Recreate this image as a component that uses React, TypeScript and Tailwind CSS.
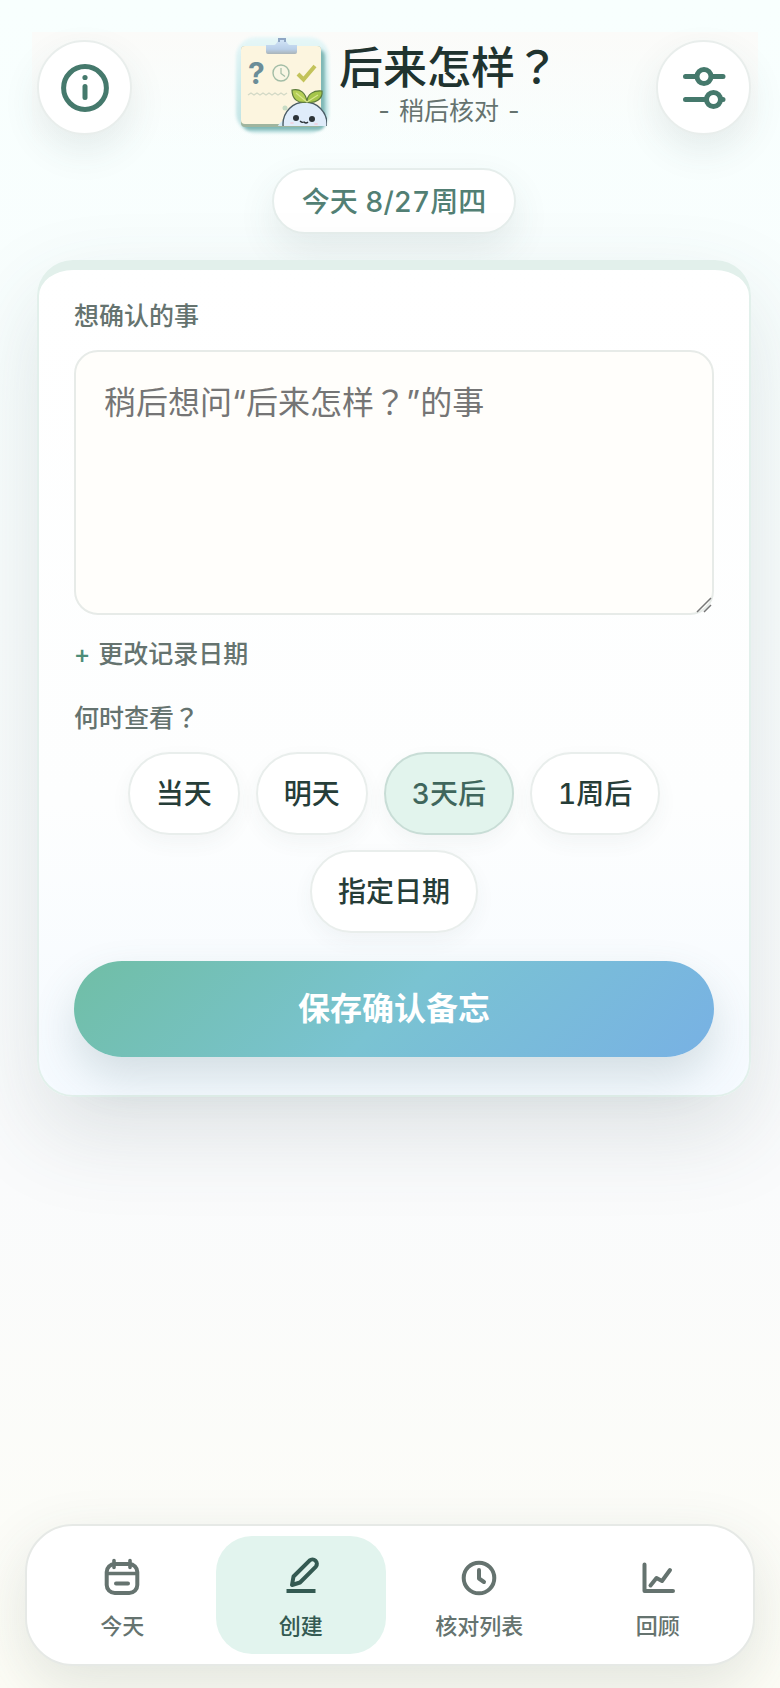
import { useState } from 'react';
import type { ReactNode } from 'react';

const dateOptions = ['当天', '明天', '3天后', '1周后', '指定日期'];

const NavIcon = ({ children }: { children: ReactNode }) => (
  <svg
    viewBox="0 0 40 40"
    className="h-10 w-10"
    fill="none"
    stroke="currentColor"
    strokeWidth="4"
    strokeLinecap="round"
    strokeLinejoin="round"
    aria-hidden="true"
  >
    {children}
  </svg>
);

const navItems = [
  {
    label: '今天',
    icon: (
      <NavIcon>
        <rect x="4.7" y="8" width="30.6" height="29" rx="8" />
        <path d="M12 4.5v7M28 4.5v7M5 17.5h30" strokeWidth="3.6" />
        <path d="M14 27.5h12" />
      </NavIcon>
    ),
  },
  {
    label: '创建',
    icon: (
      <NavIcon>
        <path d="M11 29l1.5-8.5L28.5 4.6a4.4 4.4 0 0 1 6.4 6L19 26.5z" />
        <path d="M5.5 35h29" strokeLinecap="butt" />
      </NavIcon>
    ),
  },
  {
    label: '核对列表',
    icon: (
      <NavIcon>
        <circle cx="20" cy="22" r="15.3" />
        <path d="M20 14v8.5l5 3.5" />
      </NavIcon>
    ),
  },
  {
    label: '回顾',
    icon: (
      <NavIcon>
        <path d="M6.5 8.5V35H35" />
        <path d="M12.5 29.5l6-7.5 5.5 3 8-11" />
      </NavIcon>
    ),
  },
];

const Logo = () => (
  <svg viewBox="12 8 98 102" className="h-[102px] w-[98px] shrink-0" aria-hidden="true">
    <defs>
      <linearGradient id="tile" x1="0" y1="0" x2="0" y2="1">
        <stop offset="0" stopColor="#e2f6f8" />
        <stop offset="0.5" stopColor="#c6e9ea" />
        <stop offset="1" stopColor="#b4dcdd" />
      </linearGradient>
      <linearGradient id="clip" x1="0" y1="0" x2="0" y2="1">
        <stop offset="0" stopColor="#d6e8fa" />
        <stop offset="0.7" stopColor="#b9cfe8" />
        <stop offset="1" stopColor="#aab4b8" />
      </linearGradient>
      <clipPath id="floor">
        <rect x="50" y="50" width="56" height="50" />
      </clipPath>
      <filter id="soft" x="-10%" y="-10%" width="120%" height="120%">
        <feGaussianBlur stdDeviation="1.6" />
      </filter>
    </defs>
    <rect x="15" y="11" width="93" height="96" rx="20" fill="url(#tile)" opacity="0.8" filter="url(#soft)" />
    <rect x="22" y="23" width="82" height="81" rx="7" fill="#7fb8b6" filter="url(#soft)" />
    <rect x="20" y="20" width="80" height="81" rx="4" fill="#9fb59f" />
    <rect x="20" y="20" width="80" height="78" rx="4" fill="#fcf5df" />
    <path d="M45 19h8c3 0 4-7 8-7s5 7 8 7h7v7a2 2 0 0 1-2 2H47a2 2 0 0 1-2-2z" fill="url(#clip)" />
    <path d="M58 16v-3h6v3" fill="none" stroke="#8fa6c4" strokeWidth="2" />
    <text
      x="27"
      y="58"
      fontFamily="Inter, sans-serif"
      fontSize="30"
      fontWeight="700"
      fill="#6b8d98"
    >
      ?
    </text>
    <circle cx="60" cy="47" r="8" fill="#f9f6e4" stroke="#a3bda6" strokeWidth="1.4" />
    <path d="M60 42v5.5l4 3" fill="none" stroke="#a3bda6" strokeWidth="1.2" />
    <path d="M77 48l5.5 5.5L94 40" fill="none" stroke="#c3c35a" strokeWidth="4" />
    <path
      d="M27 69l3-2 3 2 3-2 3 2 3-2 3 2 3-2 3 2 3-2 3 2 3-2 3 2 3-2"
      fill="none"
      stroke="#d3d9c6"
      strokeWidth="1.4"
    />
    <circle cx="64" cy="82" r="2.5" fill="#c7dcc5" />
    <g clipPath="url(#floor)">
      <path d="M56 102c2-6 7-8 8-8h42v8z" fill="#d5ebf5" />
      <circle cx="84" cy="98" r="22" fill="#dfecfa" stroke="#4b5d66" strokeWidth="1.4" />
    </g>
    <path
      d="M86 76c-9 2-15-3-15-12 8-2 14 3 15 12z"
      fill="#b5cf55"
      stroke="#5c7a3c"
      strokeWidth="1.2"
    />
    <path
      d="M86 76c0-8 7-12 15-11 1 8-7 13-15 11z"
      fill="#a5c64a"
      stroke="#5c7a3c"
      strokeWidth="1.2"
    />
    <path d="M75 67l11 9 11-7" fill="none" stroke="#d9e58d" strokeWidth="1.2" />
    <circle cx="75" cy="92" r="3" fill="#2c3338" />
    <circle cx="91" cy="93" r="3" fill="#2c3338" />
    <path d="M79 95q2 2 4 1q2 2 4 0" fill="none" stroke="#2c3338" strokeWidth="1.3" />
    <ellipse cx="71" cy="97" rx="2" ry="1" fill="#edd3e0" />
    <ellipse cx="95" cy="98" rx="2" ry="1" fill="#edd3e0" />
  </svg>
);

// The TC face centres the full-width question mark in its box
const QuestionMark = () => (
  <span className="font-['Noto_Sans_CJK_TC',sans-serif] leading-none" lang="zh-Hant">
    ？
  </span>
);

const roundButton =
  'flex h-[95px] w-[95px] shrink-0 items-center justify-center rounded-full border-2 border-[#e9eeec] bg-white text-[#45796c] shadow-[0_16px_36px_rgba(60,80,76,0.1)]';

const App = () => {
  const [note, setNote] = useState('');
  const [when, setWhen] = useState('3天后');
  const [tab, setTab] = useState('创建');

  return (
    <div className="flex min-h-screen flex-col bg-linear-to-b from-[#f8fffe] via-[#fafbfc] via-70% to-[#fdfdf6] pt-8 pb-[22px] font-['Inter','Noto_Sans_CJK_SC',sans-serif] text-[#263d38] tabular-nums">
      {/* Header */}
      <header className="mr-[22px] ml-8 flex items-start justify-between bg-linear-to-b from-[#fbfbf9] to-transparent pr-[7px] pb-3.5 pl-[5px]">
        <button type="button" aria-label="说明" className={`${roundButton} mt-2`}>
          <svg viewBox="0 0 48 48" className="h-12 w-12" fill="none" aria-hidden="true">
            <circle cx="24" cy="24" r="21.4" stroke="currentColor" strokeWidth="5" />
            <circle cx="24" cy="13.5" r="2.6" fill="currentColor" />
            <path d="M24 22.5v11" stroke="currentColor" strokeWidth="5" strokeLinecap="round" />
          </svg>
        </button>
        <div className="flex items-start gap-2 pt-0.5 pl-1">
          <Logo />
          <div className="flex flex-col items-center pt-[7px]">
            <h1 className="text-[44px] leading-[54px] font-medium text-[#20332f]">
              后来怎样
              <QuestionMark />
            </h1>
            <p className="text-[25px] leading-8 text-[#65736f]">- 稍后核对 -</p>
          </div>
        </div>
        <button type="button" aria-label="设置" className={`${roundButton} mt-2`}>
          <svg
            viewBox="0 0 48 48"
            className="h-12 w-12"
            fill="none"
            stroke="currentColor"
            strokeWidth="5"
            strokeLinecap="round"
            aria-hidden="true"
          >
            <path d="M5.5 12.5H16M32 12.5h11M5.5 35.5H25M41 35.5h2" />
            <circle cx="24" cy="12.5" r="7" />
            <circle cx="33.5" cy="35.5" r="7" />
          </svg>
        </button>
      </header>

      <main className="flex flex-col items-center pt-[18px] pr-[29px] pl-[37px]">
        <div className="mb-[26px] flex h-[66px] items-center rounded-full border-2 border-[#e6eeec] bg-white px-7 pt-0.5 text-[28px] font-medium text-[#527f74] shadow-[0_16px_36px_rgba(60,80,76,0.1)]">
          今天 8/27周四
        </div>

        {/* Form */}
        <form
          onSubmit={(e) => e.preventDefault()}
          className="flex w-full flex-col rounded-[36px] border-2 border-t-10 border-[#e2f0eb] bg-linear-to-b from-white via-[#fdfefe] via-65% to-[#f5faff] bg-origin-border px-[35px] pt-7 pb-[38px] shadow-[0_36px_88px_rgba(60,80,90,0.15)]"
        >
          <label htmlFor="note" className="text-[25px] leading-9 font-medium text-[#65736f]">
            想确认的事
          </label>
          <div className="relative mt-4 flex">
            <textarea
              id="note"
              value={note}
              onChange={(e) => setNote(e.target.value)}
              placeholder="稍后想问“后来怎样？”的事"
              lang="zh-Hant"
              className="h-[265px] w-full resize-none rounded-[24px] border-2 border-[#e7ebe8] bg-[#fffefb] px-7 py-6 font-['Inter','Noto_Sans_CJK_TC',sans-serif] text-[32px] leading-[54px] outline-none placeholder:text-[#757575]"
            />
            <svg
              viewBox="0 0 16 16"
              className="pointer-events-none absolute right-0.5 bottom-0.5 h-4 w-4"
              fill="none"
              stroke="#777777"
              strokeWidth="1.5"
              aria-hidden="true"
            >
              <path d="M1 15L15 1M8 15l7-7" />
            </svg>
          </div>
          <button
            type="button"
            className="mt-[21px] flex gap-2 self-start text-[25px] leading-9 font-medium text-[#65736f]"
          >
            <span className="text-[#4d8d79]">+</span>
            更改记录日期
          </button>

          <p className="mt-7 text-[25px] leading-9 font-medium text-[#65736f]">
            何时查看
            <QuestionMark />
          </p>
          <div className="mt-4 flex flex-wrap justify-center gap-x-4 gap-y-[15px]">
            {dateOptions.map((option) => (
              <button
                key={option}
                type="button"
                aria-pressed={when === option}
                onClick={() => setWhen(option)}
                className={`h-[83px] rounded-full border-2 px-[26px] text-[28px] font-medium shadow-[0_8px_20px_rgba(60,80,76,0.05)] ${
                  when === option
                    ? 'border-[#c8ddd6] bg-[#e2f4ed] text-[#3f665c]'
                    : 'border-[#e9eeec] bg-white text-[#263d38]'
                }`}
              >
                {option}
              </button>
            ))}
          </div>

          <button
            type="submit"
            className="mt-7 h-24 w-full rounded-full bg-linear-135 from-[#70bea5] via-[#7ac3d2] to-[#78b1e4] text-[32px] font-bold text-white shadow-[0_20px_44px_rgba(70,110,115,0.2)]"
          >
            保存确认备忘
          </button>
        </form>
      </main>

      {/* Bottom navigation */}
      <nav className="mx-[25px] mt-auto flex gap-2 rounded-[48px] border-2 border-[#e6e9e6] bg-white p-[10px] shadow-[0_20px_60px_rgba(60,80,70,0.14)]">
        {navItems.map((item) => (
          <a
            key={item.label}
            href="#"
            aria-current={tab === item.label ? 'page' : undefined}
            onClick={(e) => {
              e.preventDefault();
              setTab(item.label);
            }}
            className={`flex h-[118px] flex-1 flex-col items-center gap-2 rounded-[36px] pt-5 text-[22px] leading-[44px] font-medium ${
              tab === item.label ? 'bg-[#e2f4ee] text-[#345a52]' : 'text-[#65736f]'
            }`}
          >
            {item.icon}
            {item.label}
          </a>
        ))}
      </nav>
    </div>
  );
};

export default App;
